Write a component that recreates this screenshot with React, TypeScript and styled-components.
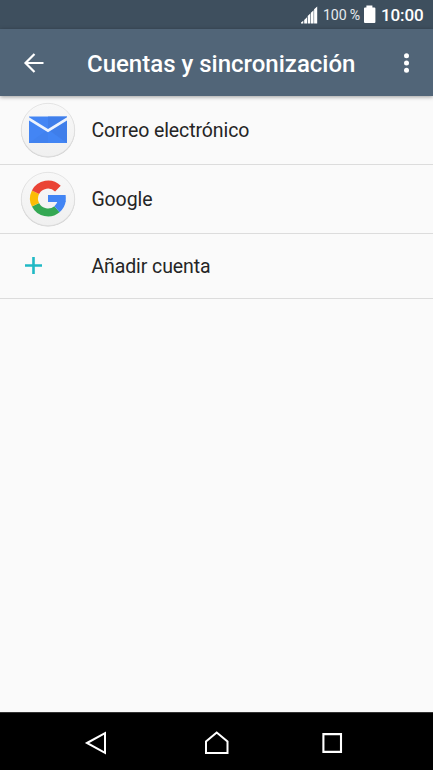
import React from "react";
import styled, { createGlobalStyle } from "styled-components";

const GlobalStyle = createGlobalStyle`
  *, *::before, *::after { box-sizing: border-box; }
  body { margin: 0; background: #fafafa; font-family: Roboto, sans-serif; }
  svg { display: block; flex: none; }
`;

const Screen = styled.div`
  display: flex;
  flex-direction: column;
  width: 100%;
  height: 100vh;
  overflow: hidden;
  background: #fafafa;
`;

const StatusBar = styled.div`
  display: flex;
  align-items: center;
  justify-content: flex-end;
  height: 29px;
  flex: none;
  padding: 0 9px 0 0;
  background: #3e4f5e;
  color: #fff;
`;

const BatteryLevel = styled.span`
  width: 38px;
  margin: 1px 3px 0 5px;
  font-size: 14.2px;
  letter-spacing: -0.15px;
  line-height: 20px;
  white-space: nowrap;
  color: #e6eaee;
`;

const Clock = styled.span`
  width: 43px;
  margin: 1px 0 0 5px;
  font-size: 17px;
  font-weight: 500;
  letter-spacing: -0.1px;
  line-height: 20px;
  white-space: nowrap;
`;

const AppBar = styled.header`
  display: flex;
  align-items: center;
  height: 67px;
  flex: none;
  padding: 0 16px 0 23px;
  background: #516578;
  color: #fff;
  box-shadow: 0 1px 4px rgba(0, 0, 0, 0.38);
  z-index: 1;
`;

const Title = styled.h1`
  flex: 1;
  margin: 2px 0 0 42px;
  font-size: 24px;
  font-weight: 500;
  line-height: 32px;
  white-space: nowrap;
`;

const IconButton = styled.button`
  display: flex;
  padding: 0;
  border: 0;
  background: none;
  color: inherit;
`;

const AccountList = styled.main`
  flex: 1;
`;

const AccountRow = styled.div<{ $height: number }>`
  display: flex;
  align-items: center;
  height: ${(p) => p.$height}px;
  padding-left: 20px;
  border-bottom: 1px solid #dcdcdc;
`;

const IconSlot = styled.div`
  display: flex;
  width: 71.4px;
`;

const Label = styled.span`
  margin-top: 1px;
  font-size: 19.5px;
  letter-spacing: -0.09px;
  line-height: 26px;
  color: #252525;
`;

const NavBar = styled.nav`
  display: flex;
  align-items: center;
  height: 58px;
  flex: none;
  padding: 2px 87px 0 82px;
  background: #000;
  border-top: 1px solid #333;
  color: #fff;
`;

const NavButton = styled(IconButton)<{ $before?: number }>`
  margin-left: ${(p) => p.$before ?? 0}px;
`;

const Badge = ({ id, children }: { id: string; children: React.ReactNode }) => (
  <svg width="56" height="58" viewBox="0 0 56 58">
    <defs>
      <linearGradient id={id} x1="0" y1="0" x2="0" y2="1">
        <stop offset="0" stopColor="#f8f8f8" />
        <stop offset="1" stopColor="#f0f0f0" />
      </linearGradient>
    </defs>
    <circle cx="28" cy="29.6" r="27" fill="#cecece" />
    <circle cx="28" cy="29" r="26.7" fill={`url(#${id})`} stroke="#dcdcdc" strokeWidth="0.7" />
    {children}
  </svg>
);

const MailIcon = () => (
  <Badge id="mailBadge">
    <path d="M9 15.6H47V42H9Z" fill="#4385f4" />
    <path d="M28 15.6H47V42H28Z" fill="#3f7eea" />
    <path d="M9 42L28 28.5V42Z" fill="#4182ef" />
    <path d="M28 28.5L47 42H28Z" fill="#4285f4" />
    <path d="M9 16.2V19.6L28 31.3L47 19.6V16.2L28 28Z" fill="#edf3fd" />
  </Badge>
);

const GoogleIcon = () => (
  <Badge id="googleBadge">
    <g fill="none" strokeWidth="8">
      <path stroke="#34a853" d="M15.5 34.8A14 14 0 0 0 37 39.2" />
      <path stroke="#fbbc05" d="M15.5 22.2A14 14 0 0 0 15.5 34.8" />
      <path stroke="#ea4335" d="M37.9 18.6A14 14 0 0 0 15.5 22.2" />
      <path stroke="#4285f4" d="M37 39.2A14 14 0 0 0 41.8 30.5" />
    </g>
    <path fill="#4285f4" d="M28 25H45.6Q46 28 45.7 31.5L44 32H28Z" />
  </Badge>
);

const AddIcon = () => (
  <svg width="28" height="24" viewBox="0 0 28 24">
    <path d="M5 11.5H22M13.5 3V20" stroke="#20b9c5" strokeWidth="2.6" />
  </svg>
);

const accounts = [
  { label: "Correo electrónico", icon: <MailIcon />, height: 69 },
  { label: "Google", icon: <GoogleIcon />, height: 69 },
  { label: "Añadir cuenta", icon: <AddIcon />, height: 65 },
];

export default function App() {
  return (
    <>
      <GlobalStyle />
      <Screen>
        <StatusBar>
          <svg width="18" height="29" viewBox="0 0 18 29" fill="#fff">
            <path d="M1 23.5V22.5L3.3 20.8V23.5ZM4.2 23.5V20L7 17.2V23.5ZM7.7 23.5V16L10.3 13.4V23.5ZM10.9 23.5V12.8L13.6 10.3V23.5ZM14.1 23.5V9.2L17.2 6.5V23.5Z" />
          </svg>
          <BatteryLevel>100 %</BatteryLevel>
          <svg width="12" height="29" viewBox="0 0 12 29" fill="#fff">
            <path d="M2.4 5.5H8.4V7.5H10.4Q11.4 7.5 11.4 8.5V22Q11.4 23 10.4 23H1Q0 23 0 22V8.5Q0 7.5 1 7.5H2.4Z" />
          </svg>
          <Clock>10:00</Clock>
        </StatusBar>
        <AppBar>
          <IconButton aria-label="Atrás">
            <svg width="22" height="22" viewBox="0 0 22 22" fill="none" stroke="currentColor" strokeWidth="2.2">
              <path d="M20.5 11H3M11.5 2L2.5 11L11.5 20" />
            </svg>
          </IconButton>
          <Title>Cuentas y sincronización</Title>
          <IconButton aria-label="Más opciones">
            <svg width="20" height="24" viewBox="0 0 20 24" fill="currentColor">
              <circle cx="9.5" cy="4.8" r="2.5" />
              <circle cx="9.5" cy="12" r="2.5" />
              <circle cx="9.5" cy="19.2" r="2.5" />
            </svg>
          </IconButton>
        </AppBar>
        <AccountList>
          {accounts.map((a) => (
            <AccountRow key={a.label} $height={a.height}>
              <IconSlot>{a.icon}</IconSlot>
              <Label>{a.label}</Label>
            </AccountRow>
          ))}
        </AccountList>
        <NavBar>
          <NavButton aria-label="Volver">
            <svg width="28" height="28" viewBox="0 0 28 28" fill="none" stroke="currentColor" strokeWidth="2">
              <path d="M5 14L23 4.2V23.8Z" />
            </svg>
          </NavButton>
          <NavButton $before={93} aria-label="Inicio">
            <svg width="28" height="28" viewBox="0 0 28 28" fill="none" stroke="currentColor" strokeWidth="2">
              <path d="M3 24V12.5L13.7 3.5L24.5 12.5V24Z" />
            </svg>
          </NavButton>
          <NavButton $before={87} aria-label="Recientes">
            <svg width="28" height="28" viewBox="0 0 28 28" fill="none" stroke="currentColor" strokeWidth="2.1">
              <path d="M5.4 5.1H23V22.9H5.4Z" />
            </svg>
          </NavButton>
        </NavBar>
      </Screen>
    </>
  );
}
